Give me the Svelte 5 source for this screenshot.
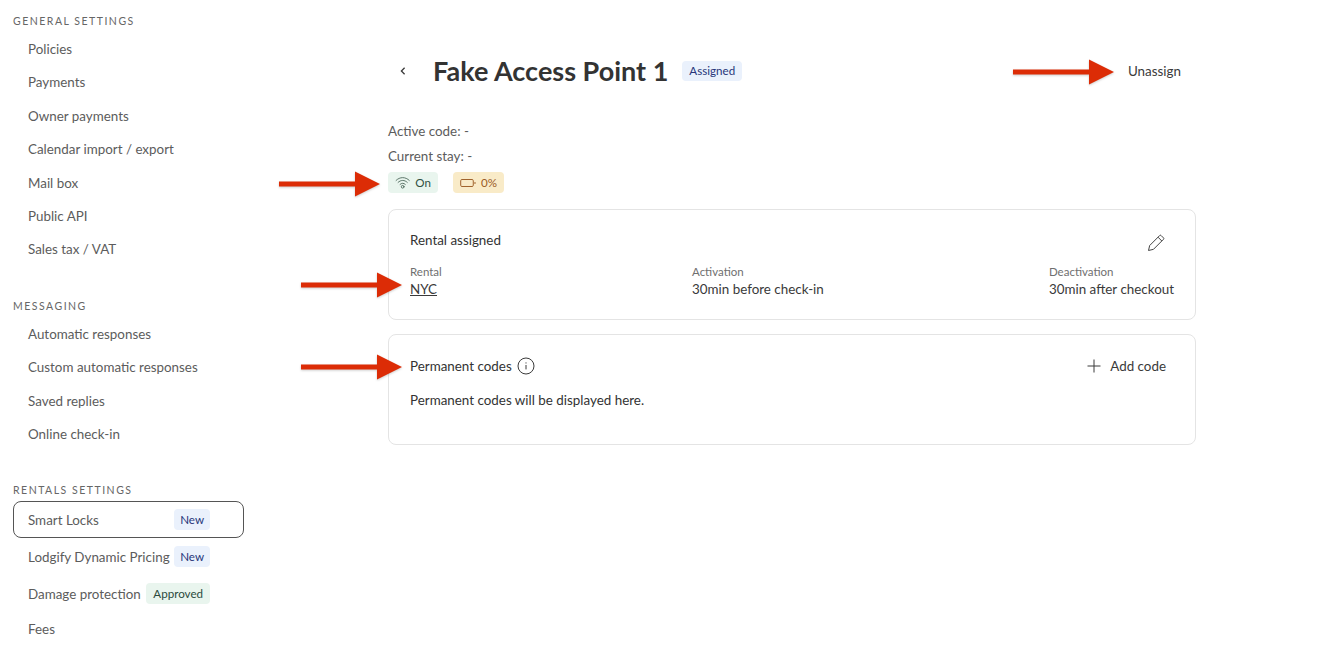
<script>
  const groups = [
    { title: 'GENERAL SETTINGS', items: ['Policies', 'Payments', 'Owner payments', 'Calendar import / export', 'Mail box', 'Public API', 'Sales tax / VAT'] },
    { title: 'MESSAGING', items: ['Automatic responses', 'Custom automatic responses', 'Saved replies', 'Online check-in'] }
  ];
  const arrows = [
    { x: 1013, y: 72 },
    { x: 279, y: 184 },
    { x: 301, y: 285 },
    { x: 301, y: 367 }
  ];
</script>

<div class="page">
  <aside class="sidebar">
    {#each groups as g}
      <section class="group">
        <h3>{g.title}</h3>
        <ul>
          {#each g.items as item}
            <li>{item}</li>
          {/each}
        </ul>
      </section>
    {/each}
    <section class="group rentals">
      <h3>RENTALS SETTINGS</h3>
      <div class="active"><span>Smart Locks</span><span class="tag blue new">New</span></div>
      <div class="row"><span>Lodgify Dynamic Pricing</span><span class="tag blue new">New</span></div>
      <div class="row"><span>Damage protection</span><span class="tag green">Approved</span></div>
      <div class="row fees"><span>Fees</span></div>
    </section>
  </aside>

  <main class="main">
    <header class="head">
      <svg class="back" width="16" height="16" viewBox="0 0 16 16" fill="none" stroke="#3a3a3a" stroke-width="1.3"><path d="M9.6 4.8 6.4 8l3.2 3.2" /></svg>
      <h1>Fake Access Point 1</h1>
      <span class="tag blue assigned">Assigned</span>
      <button class="unassign">Unassign</button>
    </header>

    <p class="meta first">Active code: -</p>
    <p class="meta">Current stay: -</p>
    <div class="status">
      <span class="chip on">
        <svg width="17" height="15" viewBox="0 0 17 15" fill="none" stroke="#3d5a4c" stroke-width="0.9" stroke-linecap="round">
          <path d="M1.2 5.2C5.4 1 11.6 1 15.8 5.2" />
          <path d="M3.4 7.4c3-3 7.2-3 10.2 0" />
          <path d="M5.6 9.6c1.8-1.7 4-1.7 5.8 0" />
          <circle cx="8.5" cy="12.2" r="1.5" />
        </svg>
        On
      </span>
      <span class="chip low">
        <svg width="16" height="10" viewBox="0 0 16 10" fill="none" stroke="#a0622c" stroke-width="1">
          <rect x="0.7" y="1.5" width="12.6" height="7" rx="1.2" />
          <path d="M15 4v2" />
        </svg>
        0%
      </span>
    </div>

    <section class="card rental">
      <div class="card-top">
        <h2>Rental assigned</h2>
        <svg class="pencil" width="19" height="19" viewBox="0 0 20 20" fill="none" stroke="#3a3a3a" stroke-width="1" stroke-linejoin="round">
          <path d="M1.6 18.4 2.8 13.2 13.4 2.6a1 1 0 0 1 1.4 0l2.6 2.6a1 1 0 0 1 0 1.4L6.8 17.2Z" />
          <path d="M11.6 4.4l4 4" />
        </svg>
      </div>
      <div class="fields">
        <div class="field"><small>Rental</small><a href="#nyc">NYC</a></div>
        <div class="field"><small>Activation</small><span>30min before check-in</span></div>
        <div class="field"><small>Deactivation</small><span>30min after checkout</span></div>
      </div>
    </section>

    <section class="card codes">
      <div class="card-top">
        <div class="title-row">
          <h2>Permanent codes</h2>
          <svg width="18" height="18" viewBox="0 0 18 18" fill="none" stroke="#3a3a3a" stroke-width="1">
            <circle cx="9" cy="9" r="8" />
            <path d="M9 8v4.4M9 5.4v1.1" />
          </svg>
        </div>
        <button class="add">
          <svg width="16" height="16" viewBox="0 0 16 16" fill="none" stroke="#3a3a3a" stroke-width="1"><path d="M8 1.5v13M1.5 8h13" /></svg>
          Add code
        </button>
      </div>
      <p class="empty">Permanent codes will be displayed here.</p>
    </section>
  </main>

  {#each arrows as a}
    <svg class="arrow" style="left:{a.x}px;top:{a.y - 13}px" width="102" height="26" viewBox="0 0 102 26">
      <path d="M0 10.6H76V0.5L101 13 76 25.5V15.4H0Z" fill="#dc2c06" />
    </svg>
  {/each}
</div>

<style>
  :global(body) {
    margin: 0;
    background: #fff;
    font-family: "Lato", "Noto Sans", sans-serif;
    color: #3a3a3a;
  }
  .page {
    position: relative;
    display: flex;
    width: 1322px;
    height: 648px;
    overflow: hidden;
    font-size: 13.4px;
  }
  .sidebar {
    width: 231px;
    margin-left: 13px;
    padding-top: 14px;
    flex: none;
  }
  .group { margin-bottom: 32px; }
  h3 {
    margin: 0;
    font-size: 10.5px;
    line-height: 14px;
    font-weight: 400;
    letter-spacing: 1.5px;
    color: #666;
  }
  ul { list-style: none; margin: 5px 0 0; padding: 0; }
  li {
    height: 33.4px;
    line-height: 33.4px;
    padding-left: 15px;
    color: #5c5c5c;
  }
  .rentals h3 { margin-bottom: 4px; }
  .active, .row {
    display: flex;
    align-items: center;
    justify-content: space-between;
    box-sizing: border-box;
    width: 197px;
    padding-left: 15px;
    color: #5c5c5c;
  }
  .active {
    width: 231px;
    height: 37px;
    padding-right: 33px;
    border: 1px solid #555;
    border-radius: 8px;
    padding-left: 14px;
  }
  .row { height: 37px; }
  .row.fees { height: 33px; }
  .tag {
    display: inline-flex;
    align-items: center;
    height: 21px;
    padding: 0 7px;
    border-radius: 4px;
    font-size: 11.6px;
    line-height: 1;
  }
  .new { padding: 0 6px; }
  .blue { background: #eaf1fc; color: #27367a; }
  .green { background: #e9f5ee; color: #2b4a3c; }

  .main {
    width: 808px;
    margin-left: 144px;
    flex: none;
  }
  .head {
    display: flex;
    align-items: center;
    height: 40px;
    margin-top: 51px;
  }
  .back { margin-left: 7px; margin-right: 22px; }
  h1 {
    margin: 0 14px 0 0;
    font-size: 27px;
    font-weight: 700;
    line-height: 40px;
    color: #333;
  }
  .assigned { height: 20px; }
  .unassign {
    margin-left: auto;
    margin-right: 15px;
    margin-bottom: 1px;
    background: none;
    border: none;
    padding: 0;
    font: inherit;
    color: #3a3a3a;
  }
  .meta {
    margin: 0;
    height: 25px;
    line-height: 25px;
    color: #5c5c5c;
  }
  .meta.first { margin-top: 28px; }
  .status {
    display: flex;
    gap: 15px;
    margin-top: 3px;
    margin-bottom: 16px;
  }
  .chip {
    display: inline-flex;
    align-items: center;
    gap: 5px;
    height: 21px;
    box-sizing: border-box;
    padding: 0 7px;
    border-radius: 4px;
    font-size: 11.6px;
  }
  .on { width: 50px; background: #e9f5ee; color: #2f4f42; }
  .low { width: 51px; background: #f9ebc8; color: #9a5a25; }

  .card {
    box-sizing: border-box;
    height: 111px;
    border: 1px solid #e4e4e4;
    border-radius: 8px;
    padding: 0 21px;
  }
  .rental { margin-bottom: 14px; }
  .card-top {
    display: flex;
    align-items: center;
    justify-content: space-between;
  }
  .rental .card-top { padding-top: 20px; height: 20px; }
  .pencil { margin-right: 8px; position: relative; top: 2px; }
  h2 {
    margin: 0;
    font-size: 13.4px;
    font-weight: 400;
    color: #333;
  }
  .fields {
    display: grid;
    grid-template-columns: 282px 1fr auto;
    margin-top: 14px;
  }
  .field { display: flex; flex-direction: column; }
  small { font-size: 11.5px; line-height: 15px; color: #6f6f6f; }
  .field span, .field a { line-height: 19px; color: #3a3a3a; margin-top: 1px; }
  .codes .card-top { padding-top: 21px; height: 20px; }
  .title-row { display: flex; align-items: center; gap: 5px; }
  .add {
    display: flex;
    align-items: center;
    gap: 8px;
    margin-right: 8px;
    background: none;
    border: none;
    padding: 0;
    font: inherit;
    color: #3a3a3a;
  }
  .empty { margin: 15px 0 0; line-height: 18px; color: #333; }
  .arrow {
    position: absolute;
    filter: drop-shadow(0 1px 1px rgba(0, 0, 0, 0.2));
  }
</style>
